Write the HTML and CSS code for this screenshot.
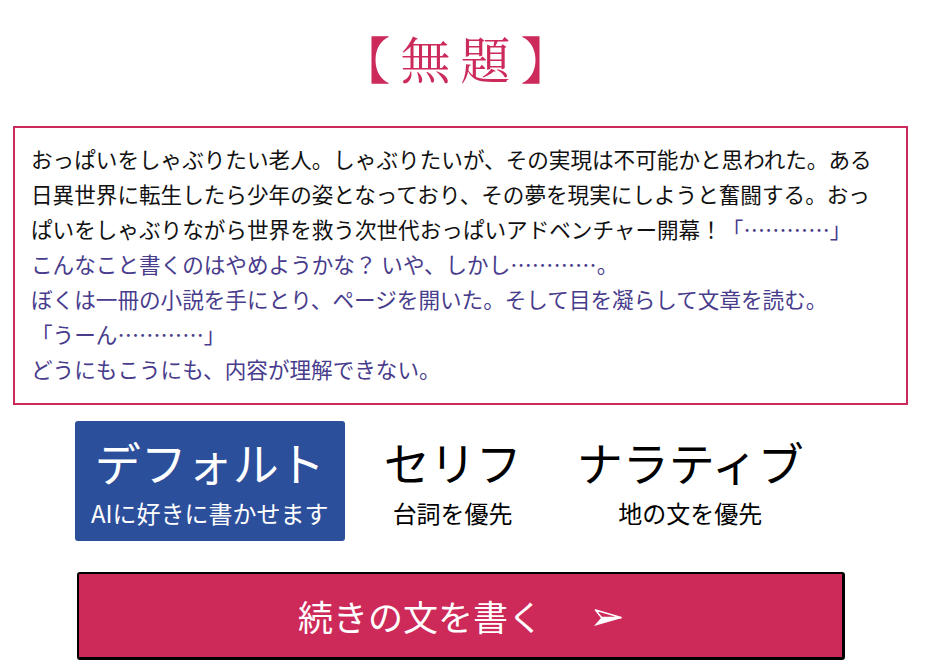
FILE: index.html
```html
<!DOCTYPE html>
<html lang="ja">
<head>
<meta charset="utf-8">
<title>無題</title>
<link rel="stylesheet" href="styles.css">
</head>
<body>
<div class="page">
  <h1 class="title">【無題】</h1>
  <div class="story">
    <p class="line given">おっぱいをしゃぶりたい老人。しゃぶりたいが、その実現は不可能かと思われた。ある</p>
    <p class="line given">日異世界に転生したら少年の姿となっており、その夢を現実にしようと奮闘する。おっ</p>
    <p class="line"><span class="given">ぱいをしゃぶりながら世界を救う次世代おっぱいアドベンチャー開幕！</span><span class="generated">「…………」</span></p>
    <p class="line generated">こんなこと書くのはやめようかな？ いや、しかし…………。</p>
    <p class="line generated">ぼくは一冊の小説を手にとり、ページを開いた。そして目を凝らして文章を読む。</p>
    <p class="line generated">「うーん…………」</p>
    <p class="line generated">どうにもこうにも、内容が理解できない。</p>
  </div>
  <div class="modes">
    <div class="mode mode-active">
      <div class="mode-name">デフォルト</div>
      <div class="mode-desc">AIに好きに書かせます</div>
    </div>
    <div class="mode">
      <div class="mode-name">セリフ</div>
      <div class="mode-desc">台詞を優先</div>
    </div>
    <div class="mode">
      <div class="mode-name">ナラティブ</div>
      <div class="mode-desc">地の文を優先</div>
    </div>
  </div>
  <button class="continue" type="button">
    <span class="continue-label">続きの文を書く</span>
    <svg class="continue-arrow" width="30" height="18" viewBox="0 0 30 18" aria-hidden="true">
      <polygon points="1,17 8,9 29,9" fill="#fff"/>
      <polygon points="2.5,1 28,8.6 8.5,8.6" fill="none" stroke="#fff" stroke-width="1.6" stroke-linejoin="round"/>
    </svg>
  </button>
</div>
</body>
</html>
```

FILE: styles.css
```css
html, body {
  margin: 0;
  padding: 0;
  background: #ffffff;
}

body {
  font-family: "Noto Sans CJK JP", "Noto Sans", sans-serif;
  color: #111111;
}

.page {
  width: 895px;
  margin-left: 13px;
  display: flex;
  flex-direction: column;
}

.title {
  margin: 27px 0 39px 0;
  font-family: "Noto Serif CJK JP", "Noto Sans CJK JP", serif;
  font-weight: 400;
  font-size: 50px;
  line-height: 60px;
  letter-spacing: 10px;
  text-align: center;
  padding-left: 0;
  color: #cc2a5a;
}

.story {
  border: 2px solid #cc2a5a;
  padding: 13px 16px 17px 16px;
  font-size: 21.6px;
  line-height: 35px;
}

.line {
  margin: 0;
  white-space: nowrap;
}

.given {
  color: #111111;
}

.generated {
  color: #483c8c;
}

.modes {
  display: flex;
  gap: 23px;
  margin: 16px 0 0 62px;
}

.mode {
  display: flex;
  flex-direction: column;
  align-items: center;
  height: 120px;
  box-sizing: border-box;
  padding: 12px 16px 0 16px;
  border-radius: 3px;
  color: #000;
}

.mode-active {
  background: #2c4f9c;
  color: #fff;
}

.mode-name {
  font-size: 46px;
  line-height: 56px;
  white-space: nowrap;
}

.mode-desc {
  margin-top: 8px;
  font-size: 24px;
  line-height: 32px;
  white-space: nowrap;
}

.continue {
  margin: 31px 0 0 64px;
  width: 768px;
  height: 88px;
  box-sizing: border-box;
  display: flex;
  align-items: center;
  justify-content: center;
  gap: 50px;
  background: #cd2a5a;
  border: 2px solid #000;
  border-bottom-width: 3px;
  border-right-width: 3px;
  border-radius: 3px;
  color: #fff;
  font-family: "Noto Sans CJK JP", "Noto Sans", sans-serif;
  font-size: 35px;
  padding: 0;
  cursor: pointer;
}

.continue-label {
  line-height: 40px;
}

.continue-arrow {
  display: block;
  margin-top: 4px;
}
```
